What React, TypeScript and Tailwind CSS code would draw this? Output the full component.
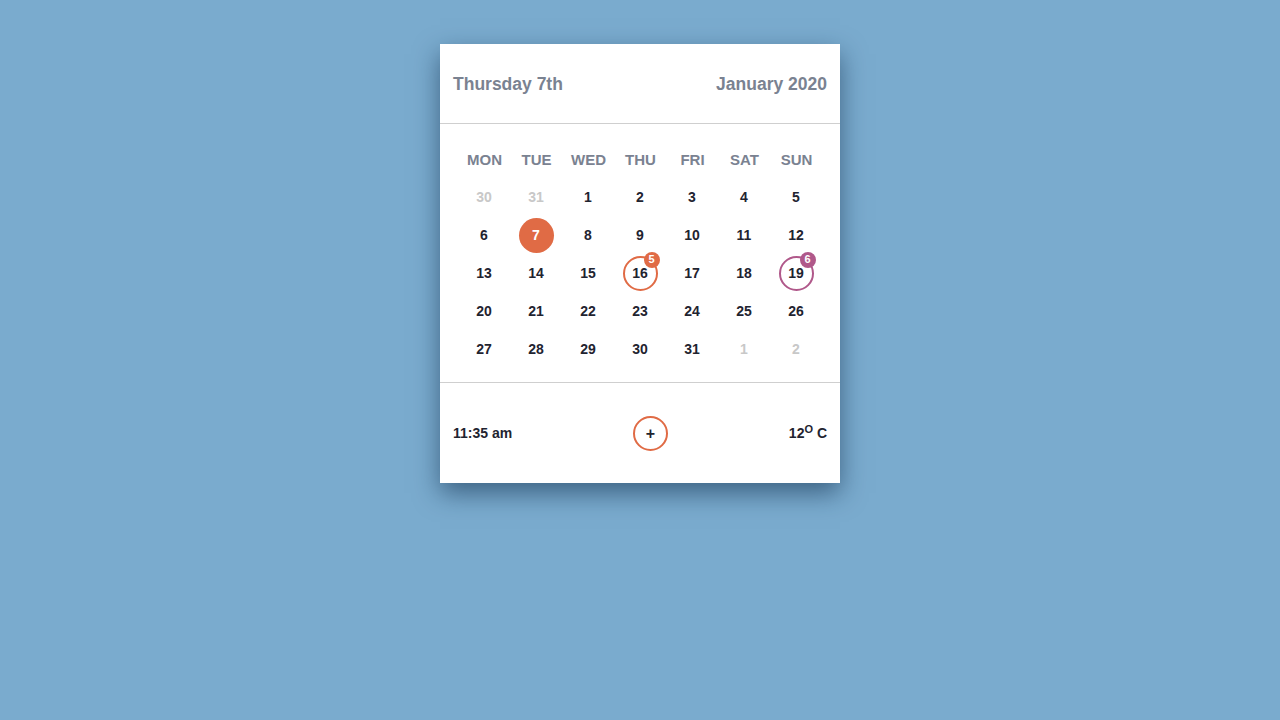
import React from "react";

const days = ["MON", "TUE", "WED", "THU", "FRI", "SAT", "SUN"];

type Cell = { n: number; muted?: boolean; today?: boolean; event?: { count: number; color: "orange" | "purple" } };

const cells: Cell[] = [
  { n: 30, muted: true },
  { n: 31, muted: true },
  ...Array.from({ length: 31 }, (_, i) => ({ n: i + 1 } as Cell)),
  { n: 1, muted: true },
  { n: 2, muted: true },
];
cells[8].today = true;
cells[17].event = { count: 5, color: "orange" };
cells[20].event = { count: 6, color: "purple" };

function DayCell({ cell }: { cell: Cell }) {
  if (cell.today) {
    return (
      <div className="flex h-[38px] items-center justify-center">
        <span className="flex h-[35px] w-[35px] items-center justify-center rounded-full bg-[#e06b45] text-white">
          {cell.n}
        </span>
      </div>
    );
  }
  if (cell.event) {
    const orange = cell.event.color === "orange";
    return (
      <div className="flex h-[38px] items-center justify-center">
        <span
          className={`relative flex h-[35px] w-[35px] items-center justify-center rounded-full border-2 ${
            orange ? "border-[#e06b45]" : "border-[#b0588a]"
          }`}
        >
          {cell.n}
          <span
            className={`absolute -right-[4px] -top-[6px] flex h-[16px] w-[16px] items-center justify-center rounded-full text-[11px] text-white ${
              orange ? "bg-[#e06b45]" : "bg-[#b0588a]"
            }`}
          >
            {cell.event.count}
          </span>
        </span>
      </div>
    );
  }
  return (
    <div
      className={`flex h-[38px] items-center justify-center ${
        cell.muted ? "text-[#c8c8c8]" : ""
      }`}
    >
      {cell.n}
    </div>
  );
}

export default function App() {
  return (
    <div className="min-h-screen bg-[#7aabce] pt-[44px] font-['Liberation_Sans',Arial,sans-serif]">
      <div className="mx-auto w-[400px] bg-white shadow-[0_10px_24px_rgba(20,50,80,0.6)]">
        <div className="flex h-[80px] items-center justify-between border-b border-[#cfcfcf] px-[13px] pt-[1px] text-[17.5px] font-bold text-[#7a8291]">
          <span>Thursday 7th</span>
          <span>January 2020</span>
        </div>
        <div className="border-b border-[#cfcfcf] px-[18px] pb-[14px] pt-[16px]">
          <div className="grid grid-cols-7 pt-[3px] pb-[-3px] text-[15px] font-bold text-[#7a8291]">
            {days.map((d) => (
              <div key={d} className="flex h-[35px] items-center justify-center pl-[1px]">
                {d}
              </div>
            ))}
          </div>
          <div className="grid grid-cols-7 text-[14px] font-bold text-[#1f2430]">
            {cells.map((c, i) => (
              <DayCell key={i} cell={c} />
            ))}
          </div>
        </div>
        <div className="flex h-[100px] items-center justify-between px-[13px] pt-[1px] text-[14px] font-bold text-[#1f2430]">
          <span>11:35 am</span>
          <button className="flex h-[35px] w-[35px] items-center justify-center rounded-full border-2 border-[#e06b45] text-[16px] leading-none">
            +
          </button>
          <span>
            12<sup className="text-[11px]">O</sup> C
          </span>
        </div>
      </div>
    </div>
  );
}
